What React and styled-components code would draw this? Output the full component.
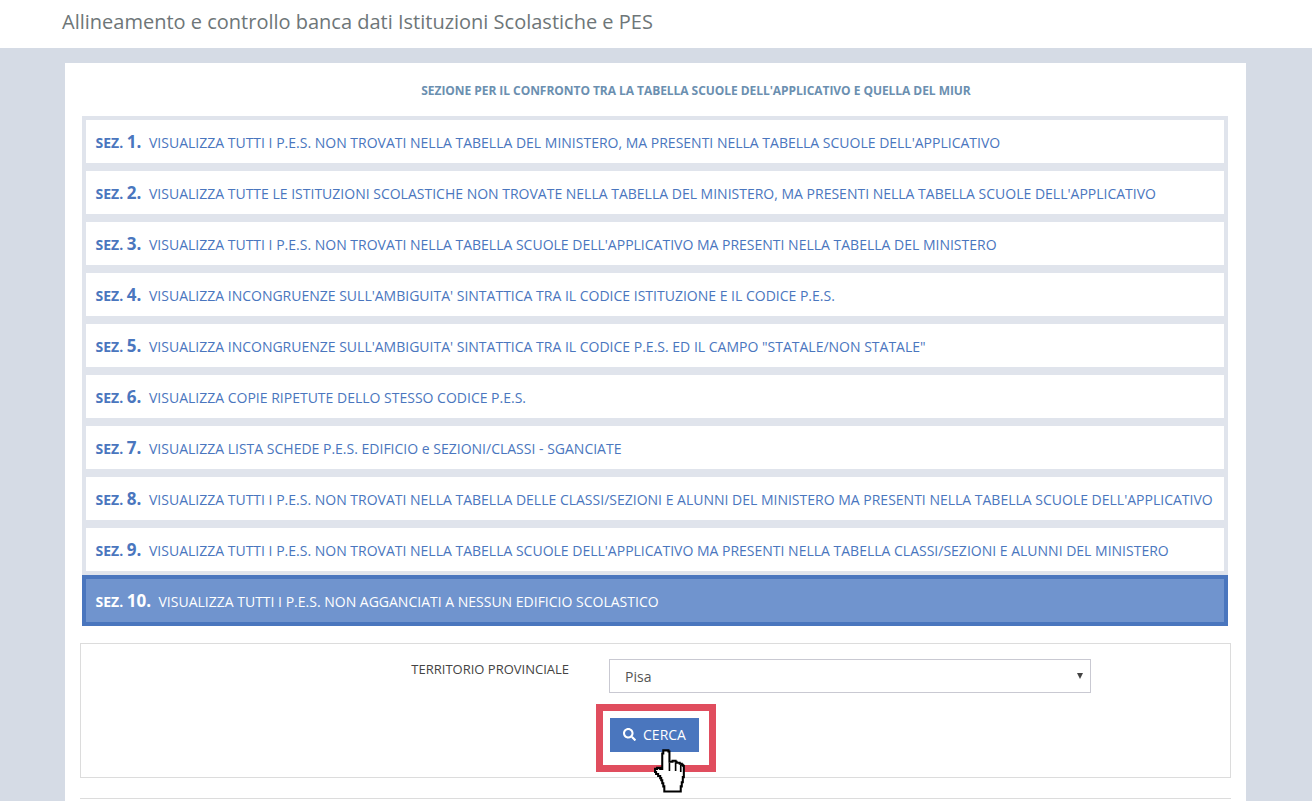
import React from "react";
import styled, { createGlobalStyle } from "styled-components";
import { FaSearch } from "react-icons/fa";

const Global = createGlobalStyle`
  html, body { margin: 0; padding: 0; background: #d5dbe5; }
  body { font-family: "Open Sans", "Noto Sans", sans-serif; }
  #root { height: 801px; overflow: hidden; }
`;

const TopBar = styled.header`
  height: 48px;
  background: #fff;
  padding-left: 62px;
  display: flex;
  align-items: center;
  box-sizing: border-box;
`;
const Title = styled.h1`
  margin: 0 0 6px;
  font-size: 20px;
  font-weight: 400;
  color: #6e7678;
`;
const Main = styled.main`
  padding: 15px 66px 0 65px;
`;
const Card = styled.section`
  background: #fff;
  padding: 0 15px 40px;
  height: 760px;
  box-sizing: border-box;
`;
const Heading = styled.h2`
  margin: 0;
  padding-top: 21px;
  height: 53px;
  box-sizing: border-box;
  text-align: center;
  padding-left: 81px;
  font-size: 12px;
  line-height: 14px;
  font-weight: 700;
  letter-spacing: -0.05px;
  color: #6b8fb0;
`;
const List = styled.div`
  margin: 0 3px 0 2px;
`;
const Row = styled.div`
  box-sizing: border-box;
  height: 51px;
  border: 4px solid ${(p) => (p.$active ? "#4a76be" : "#e0e4ec")};
  background: ${(p) => (p.$active ? "#7094ce" : "#fff")};
  color: ${(p) => (p.$active ? "#fff" : "#4a76be")};
  padding-left: 9.5px;
  display: flex;
  align-items: center;
  white-space: nowrap;
  font-size: 14px;
`;
const Sez = styled.b`
  font-size: 14px;
  font-weight: 700;
  width: ${(p) => (p.$active ? "63px" : "53.5px")};
  flex: none;
  color: ${(p) => (p.$active ? "#fff" : "#4a76be")};
  em { font-style: normal; font-size: 17px; }
`;
const RowText = styled.span`
  padding-top: 2px;
`;
const FormBox = styled.div`
  position: relative;
  margin-top: 17px;
  height: 135px;
  box-sizing: border-box;
  border: 1px solid #dcdcdc;
`;
const Field = styled.div`
  display: flex;
  padding-top: 15px;
`;
const Label = styled.label`
  width: 488px;
  padding-top: 1px;
  box-sizing: border-box;
  text-align: right;
  font-size: 13px;
  line-height: 18px;
  color: #444;
`;
const Select = styled.div`
  margin-left: 40px;
  width: 482px;
  height: 34px;
  box-sizing: border-box;
  border: 1px solid #c9c9d2;
  padding-left: 15px;
  display: flex;
  align-items: center;
  justify-content: space-between;
  font-size: 14px;
  color: #555;
`;
const Arrow = styled.span`
  width: 0;
  height: 0;
  margin-right: 7px;
  border-left: 3px solid transparent;
  border-right: 3px solid transparent;
  border-top: 6px solid #444;
`;
const Actions = styled.div`
  display: flex;
  padding: 25px 0 0 529px;
`;
const Button = styled.button`
  width: 89px;
  height: 34px;
  border: 0;
  padding: 0 0 1px;
  background: #4a76be;
  color: #fff;
  font-family: inherit;
  font-size: 14px;
  display: flex;
  align-items: center;
  justify-content: center;
  gap: 7px;
`;
const Highlight = styled.div`
  position: absolute;
  left: 515px;
  top: 60px;
  width: 120px;
  height: 68px;
  box-sizing: border-box;
  border: 7px solid #e04d5e;
`;
const Cursor = styled.svg`
  position: absolute;
  left: 572px;
  top: 105px;
  width: 37px;
  height: 48px;
`;
const Rule = styled.hr`
  margin: 20px 0 0;
  border: 0;
  border-top: 1px solid #dcdcdc;
`;

const items = [
  "VISUALIZZA TUTTI I P.E.S. NON TROVATI NELLA TABELLA DEL MINISTERO, MA PRESENTI NELLA TABELLA SCUOLE DELL'APPLICATIVO",
  "VISUALIZZA TUTTE LE ISTITUZIONI SCOLASTICHE NON TROVATE NELLA TABELLA DEL MINISTERO, MA PRESENTI NELLA TABELLA SCUOLE DELL'APPLICATIVO",
  "VISUALIZZA TUTTI I P.E.S. NON TROVATI NELLA TABELLA SCUOLE DELL'APPLICATIVO MA PRESENTI NELLA TABELLA DEL MINISTERO",
  "VISUALIZZA INCONGRUENZE SULL'AMBIGUITA' SINTATTICA TRA IL CODICE ISTITUZIONE E IL CODICE P.E.S.",
  "VISUALIZZA INCONGRUENZE SULL'AMBIGUITA' SINTATTICA TRA IL CODICE P.E.S. ED IL CAMPO \"STATALE/NON STATALE\"",
  "VISUALIZZA COPIE RIPETUTE DELLO STESSO CODICE P.E.S.",
  "VISUALIZZA LISTA SCHEDE P.E.S. EDIFICIO e SEZIONI/CLASSI - SGANCIATE",
  "VISUALIZZA TUTTI I P.E.S. NON TROVATI NELLA TABELLA DELLE CLASSI/SEZIONI E ALUNNI DEL MINISTERO MA PRESENTI NELLA TABELLA SCUOLE DELL'APPLICATIVO",
  "VISUALIZZA TUTTI I P.E.S. NON TROVATI NELLA TABELLA SCUOLE DELL'APPLICATIVO MA PRESENTI NELLA TABELLA CLASSI/SEZIONI E ALUNNI DEL MINISTERO",
  "VISUALIZZA TUTTI I P.E.S. NON AGGANCIATI A NESSUN EDIFICIO SCOLASTICO",
];

export default function App() {
  return (
    <>
      <Global />
      <TopBar>
        <Title>Allineamento e controllo banca dati Istituzioni Scolastiche e PES</Title>
      </TopBar>
      <Main>
        <Card>
          <Heading>SEZIONE PER IL CONFRONTO TRA LA TABELLA SCUOLE DELL'APPLICATIVO E QUELLA DEL MIUR</Heading>
          <List>
            {items.map((text, i) => (
              <Row key={i} $active={i === 9}>
                <Sez $active={i === 9}>
                  SEZ. <em>{i + 1}.</em>
                </Sez>
                <RowText>{text}</RowText>
              </Row>
            ))}
          </List>
          <FormBox>
            <Field>
              <Label>TERRITORIO PROVINCIALE</Label>
              <Select>
                Pisa
                <Arrow />
              </Select>
            </Field>
            <Actions>
              <Button>
                <FaSearch size={13} />
                CERCA
              </Button>
            </Actions>
            <Highlight />
            <Cursor viewBox="0 0 36 46">
              <path
                d="M9 4h1V1h5v1h1v10h3v-1h3v1h1v1h3v1h2v1h1v1h1v11h-1v5h-1v4h-1v5H11v-5h-1v-3H9v-3H8v-2H7v-2H5v-2H3v-2H2v-3h2v-1h3v1h2z"
                fill="#fff"
                stroke="#000"
                strokeWidth="2"
              />
              <path d="M16 13v8M22 13v8M27 15v7" stroke="#000" strokeWidth="1.6" fill="none" />
            </Cursor>
          </FormBox>
          <Rule />
        </Card>
      </Main>
    </>
  );
}
